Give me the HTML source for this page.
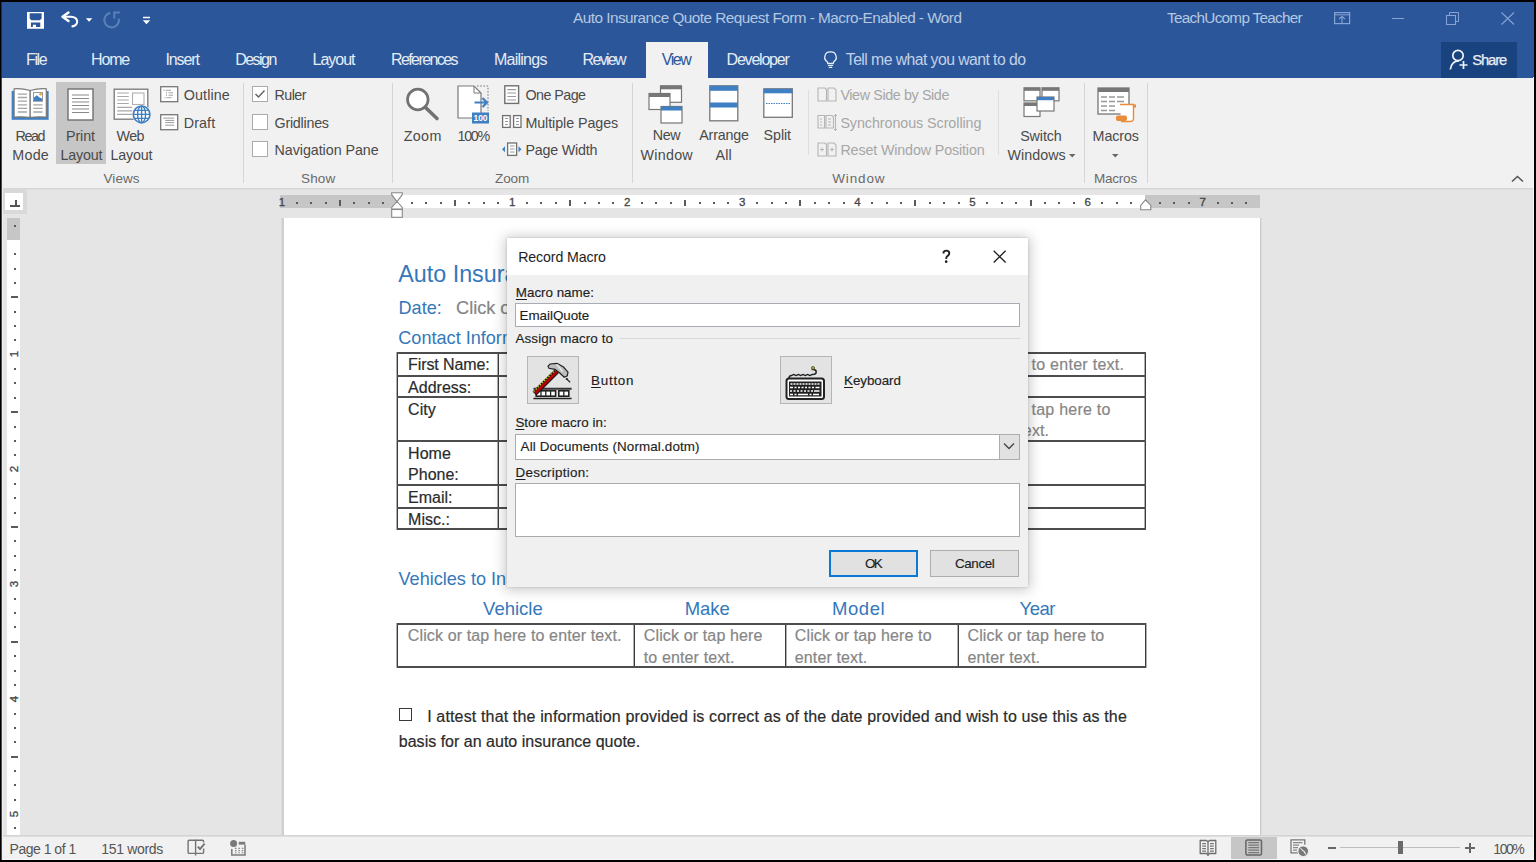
<!DOCTYPE html><html><head><meta charset="utf-8"><style>
html,body{margin:0;padding:0}
body{width:1536px;height:862px;overflow:hidden;position:relative;background:#000;font-family:"Liberation Sans",sans-serif}
.t{position:absolute;white-space:nowrap}
.r{position:absolute;box-sizing:border-box}
svg.r{overflow:visible}
u{text-decoration:underline;text-underline-offset:2px}
</style></head><body>
<div class="r" style="left:2px;top:2px;width:1532px;height:858px;background:#e5e5e5"></div>
<div class="r" style="left:2px;top:2px;width:1532px;height:76px;background:#2b579a"></div>
<div class="r" style="left:2px;top:78px;width:1532px;height:110px;background:#f1f1f1"></div>
<div class="r" style="left:2px;top:188px;width:1532px;height:1px;background:#d6d6d6"></div>
<div class="r" style="left:2px;top:189px;width:1532px;height:1px;background:#dedede"></div>
<div class="r" style="left:2px;top:835px;width:1532px;height:1px;background:#d4d4d4"></div>
<div class="r" style="left:2px;top:836px;width:1532px;height:1px;background:#dedede"></div>
<div class="r" style="left:2px;top:837px;width:1532px;height:23px;background:#f1f1f1"></div>
<div class="t" style="left:573.0px;top:10.00px;font-size:15.3px;line-height:15.3px;color:#b6c7e1;letter-spacing:-0.514px;">Auto Insurance Quote Request Form - Macro-Enabled - Word</div>
<div class="t" style="left:1167.0px;top:10.00px;font-size:15.3px;line-height:15.3px;color:#b6c7e1;letter-spacing:-0.706px;">TeachUcomp Teacher</div>
<svg class="r" style="left:27px;top:12px;" width="17" height="17" viewBox="0 0 17 17"><path d="M0 0H17V16.7H0z M2.7 1.3V6.5L4.4 8.2H12.9L14.6 6.5V1.3z M3.9 10.5V14.9H5.9V12.8H9V14.9H13.3V10.5z" fill="#fff" fill-rule="evenodd"/></svg>
<svg class="r" style="left:58px;top:8px;" width="38" height="23" viewBox="0 0 38 23"><path d="M10.5 4.6 L4.5 8.8 L10.5 13" fill="none" stroke="#fff" stroke-width="2.4" stroke-linejoin="round" stroke-linecap="round"/><path d="M5.5 8.8 H13 A6.6 4.9 0 0 1 14.4 18.4" fill="none" stroke="#fff" stroke-width="2.1" stroke-linecap="round"/><path d="M27.8 10.2 H34.3 L31.05 13.7 Z" fill="#fff"/></svg>
<svg class="r" style="left:100px;top:8px;" width="24" height="23" viewBox="0 0 24 23"><path d="M10.2 4.9 A7.3 7.3 0 1 0 18.8 10.6" fill="none" stroke="#5b7fb8" stroke-width="2.1"/><path d="M14.3 10.8 V4.6 H19.8" fill="none" stroke="#5b7fb8" stroke-width="2"/></svg>
<svg class="r" style="left:142px;top:16px;" width="9" height="9" viewBox="0 0 9 9"><path d="M1 1.5h7" stroke="#fff" stroke-width="1.5"/><path d="M0.8 4.2h7.4l-3.7 4z" fill="#fff"/></svg>
<svg class="r" style="left:1334px;top:12px;" width="17" height="13" viewBox="0 0 17 13"><rect x="0.6" y="0.6" width="15" height="11" fill="none" stroke="#86a3d3" stroke-width="1.2"/><path d="M0.6 2.8h15" stroke="#86a3d3" stroke-width="1"/><path d="M8 11.6V4 M5.2 7 L8 4.2 L10.8 7" fill="none" stroke="#86a3d3" stroke-width="1.1"/></svg>
<div class="r" style="left:1392px;top:18px;width:12px;height:1px;background:#86a3d3"></div>
<svg class="r" style="left:1446px;top:12px;" width="14" height="13" viewBox="0 0 14 13"><rect x="0.5" y="3.5" width="9" height="9" fill="none" stroke="#86a3d3"/><path d="M3.5 3.5V0.5h9v9h-3" fill="none" stroke="#86a3d3"/></svg>
<svg class="r" style="left:1501px;top:12px;" width="14" height="13" viewBox="0 0 14 13"><path d="M0.5 0.5L13 12.5M13 0.5L0.5 12.5" stroke="#86a3d3" stroke-width="1.1"/></svg>
<div class="t" style="left:26.0px;top:52.00px;font-size:16px;line-height:16px;color:#e6ecf5;letter-spacing:-1.361px;">File</div>
<div class="t" style="left:91.1px;top:52.00px;font-size:16px;line-height:16px;color:#e6ecf5;letter-spacing:-1.194px;">Home</div>
<div class="t" style="left:165.4px;top:52.00px;font-size:16px;line-height:16px;color:#e6ecf5;letter-spacing:-1.083px;">Insert</div>
<div class="t" style="left:235.2px;top:52.00px;font-size:16px;line-height:16px;color:#e6ecf5;letter-spacing:-1.541px;">Design</div>
<div class="t" style="left:312.5px;top:52.00px;font-size:16px;line-height:16px;color:#e6ecf5;letter-spacing:-1.008px;">Layout</div>
<div class="t" style="left:390.9px;top:52.00px;font-size:16px;line-height:16px;color:#e6ecf5;letter-spacing:-1.569px;">References</div>
<div class="t" style="left:494.0px;top:52.00px;font-size:16px;line-height:16px;color:#e6ecf5;letter-spacing:-0.756px;">Mailings</div>
<div class="t" style="left:582.6px;top:52.00px;font-size:16px;line-height:16px;color:#e6ecf5;letter-spacing:-1.692px;">Review</div>
<div class="t" style="left:726.6px;top:52.00px;font-size:16px;line-height:16px;color:#e6ecf5;letter-spacing:-1.217px;">Developer</div>
<div class="r" style="left:646px;top:42px;width:62px;height:36px;background:#f1f1f1"></div>
<div class="t" style="left:661.8px;top:52.00px;font-size:16px;line-height:16px;color:#2b579a;letter-spacing:-1.497px;">View</div>
<svg class="r" style="left:823px;top:51px;" width="15" height="17" viewBox="0 0 15 17"><path d="M7.5 1 A5.3 5.3 0 0 0 4.3 10.8 L4.8 12.5 H10.2 L10.7 10.8 A5.3 5.3 0 0 0 7.5 1z" fill="none" stroke="#e8eef7" stroke-width="1.3"/><path d="M5 14.5h5M5.8 16.3h3.4" stroke="#e8eef7" stroke-width="1.2"/></svg>
<div class="t" style="left:845.8px;top:52.00px;font-size:15.8px;line-height:15.8px;color:#c3d1e8;letter-spacing:-0.568px;">Tell me what you want to do</div>
<div class="r" style="left:1441px;top:42px;width:76px;height:36px;background:#19437f"></div>
<svg class="r" style="left:1449px;top:49px;" width="20" height="21" viewBox="0 0 20 21"><circle cx="9" cy="6.5" r="5.2" fill="none" stroke="#eef2f8" stroke-width="1.7"/><path d="M1.3 20.5 C2 15.5 5 12 10 11.7" fill="none" stroke="#eef2f8" stroke-width="1.7"/><path d="M10.5 16h8M14.5 12v8" stroke="#eef2f8" stroke-width="1.7"/></svg>
<div class="t" style="left:1472.3px;top:53.00px;font-size:14.8px;line-height:14.8px;color:#e8eef6;letter-spacing:-1.149px;-webkit-text-stroke:0.25px #e8eef6;">Share</div>
<div class="r" style="left:243px;top:83px;width:1px;height:100px;background:#d5d5d5"></div>
<div class="r" style="left:392px;top:83px;width:1px;height:100px;background:#d5d5d5"></div>
<div class="r" style="left:632px;top:83px;width:1px;height:100px;background:#d5d5d5"></div>
<div class="r" style="left:1084px;top:83px;width:1px;height:100px;background:#d5d5d5"></div>
<div class="r" style="left:1147px;top:83px;width:1px;height:100px;background:#d5d5d5"></div>
<div class="r" style="left:808px;top:90px;width:1px;height:65px;background:#dedede"></div>
<div class="r" style="left:998px;top:90px;width:1px;height:65px;background:#dedede"></div>
<div class="t" style="left:103.5px;top:172.00px;font-size:13.5px;line-height:13.5px;color:#6a6a6a;letter-spacing:0.058px;">Views</div>
<div class="t" style="left:301.0px;top:172.00px;font-size:13.5px;line-height:13.5px;color:#6a6a6a;letter-spacing:0.143px;">Show</div>
<div class="t" style="left:495.0px;top:172.00px;font-size:13.5px;line-height:13.5px;color:#6a6a6a;letter-spacing:-0.103px;">Zoom</div>
<div class="t" style="left:832.2px;top:172.00px;font-size:13.5px;line-height:13.5px;color:#6a6a6a;letter-spacing:0.877px;">Window</div>
<div class="t" style="left:1093.9px;top:172.00px;font-size:13.5px;line-height:13.5px;color:#6a6a6a;letter-spacing:-0.192px;">Macros</div>
<svg class="r" style="left:1511px;top:175px;" width="13" height="8" viewBox="0 0 13 8"><path d="M1 6.5L6.5 1.5L12 6.5" fill="none" stroke="#555" stroke-width="1.6"/></svg>
<div class="r" style="left:56px;top:82px;width:50px;height:82px;background:#c6c6c6"></div>
<svg class="r" style="left:11px;top:88px;" width="38" height="33" viewBox="0 0 38 33"><rect x="0.65" y="3" width="37" height="28.8" fill="#3f7fc4"/><path d="M3.1 0.8Q11 0.2 19.2 2.5V29.3Q11 28.4 3.1 29.1Z" fill="#fff" stroke="#7a7a7a" stroke-width="1.2"/><path d="M35.3 0.8Q27.5 0.2 19.2 2.5V29.3Q27.5 28.4 35.3 29.1Z" fill="#fff" stroke="#7a7a7a" stroke-width="1.2"/><path d="M6.8 6.1h9.2M6.8 9.5h9.2M6.8 13.2h9.2M6.8 16.8h9.2M6.8 20.3h9.2M6.8 24h9.2M22.3 16.8h9.3M22.3 20.3h9.3M22.3 24h9.3" stroke="#a5a5a5" stroke-width="1.3"/><rect x="22.5" y="4.5" width="9" height="8.8" fill="#fff" stroke="#999" stroke-width="1"/><path d="M23 13V9.5L25.8 7.3 28.5 9.5 31 10.5V13z" fill="#3f7fc4"/><circle cx="29.6" cy="6.2" r="1.3" fill="#f0a030"/></svg>
<div class="t" style="left:15.5px;top:129.00px;font-size:14.3px;line-height:14.3px;color:#4a4a4a;letter-spacing:-1.396px;">Read</div>
<div class="t" style="left:12.3px;top:148.00px;font-size:14.3px;line-height:14.3px;color:#4a4a4a;letter-spacing:0.243px;">Mode</div>
<svg class="r" style="left:67px;top:88px;" width="27" height="33" viewBox="0 0 27 33"><rect x="1" y="1" width="25" height="31" fill="#fff" stroke="#707070" stroke-width="1.4"/><path d="M5 7h17M5 10.5h17M5 14h17M5 17.5h17M5 21h17M5 24.5h17" stroke="#8a8a8a" stroke-width="1.1"/></svg>
<div class="t" style="left:66.0px;top:129.00px;font-size:14.3px;line-height:14.3px;color:#4a4a4a;letter-spacing:-0.101px;">Print</div>
<div class="t" style="left:60.5px;top:148.00px;font-size:14.3px;line-height:14.3px;color:#4a4a4a;letter-spacing:-0.187px;">Layout</div>
<svg class="r" style="left:113px;top:88px;" width="39" height="37" viewBox="0 0 39 37"><rect x="1.2" y="1.2" width="33.6" height="30" fill="#fff" stroke="#777" stroke-width="1.3"/><path d="M4.2 5h11.6M4.2 8.5h11.6M4.2 12h11.6M4.2 15.5h11.6M4.2 19.3h15M4.2 22.8h15M4.2 26.4h15" stroke="#a8a8a8" stroke-width="1.2"/><rect x="19.5" y="5" width="11.5" height="11.5" fill="#fff" stroke="#b0b0b0" stroke-width="1.1"/><circle cx="28.6" cy="26.4" r="9.6" fill="#f1f1f1"/><circle cx="28.6" cy="26.4" r="8.3" fill="#fff" stroke="#3f7fc4" stroke-width="1.6"/><ellipse cx="28.6" cy="26.4" rx="4" ry="8.3" fill="none" stroke="#3f7fc4" stroke-width="1.4"/><path d="M20.3 26.4h16.6M21.5 22.4h14.2M21.5 30.4h14.2M28.6 18v16.7" stroke="#3f7fc4" stroke-width="1.4"/></svg>
<div class="t" style="left:116.5px;top:129.00px;font-size:14.3px;line-height:14.3px;color:#4a4a4a;letter-spacing:-0.573px;">Web</div>
<div class="t" style="left:110.5px;top:148.00px;font-size:14.3px;line-height:14.3px;color:#4a4a4a;letter-spacing:-0.187px;">Layout</div>
<svg class="r" style="left:160px;top:86px;" width="19" height="17" viewBox="0 0 19 17"><rect x="0.7" y="0.7" width="17" height="15" fill="#fff" stroke="#777" stroke-width="1.3"/><path d="M5.5 4.3h5.5M8.5 6.8h4.5M8.5 9.2h4.5M6.5 11.7h5" stroke="#999" stroke-width="0.9"/><path d="M3.5 4.3h1M6 6.8h1M6 9.2h1M4.5 11.7h1" stroke="#888" stroke-width="1"/></svg>
<div class="t" style="left:183.7px;top:88.00px;font-size:14.3px;line-height:14.3px;color:#4a4a4a;letter-spacing:0.132px;">Outline</div>
<svg class="r" style="left:160px;top:114px;" width="19" height="17" viewBox="0 0 19 17"><rect x="0.7" y="0.7" width="17" height="15" fill="#fff" stroke="#777" stroke-width="1.3"/><path d="M3.2 4.1h11M5.2 6.4h9M5.2 8.6h9M5.2 11.2h9" stroke="#9a9a9a" stroke-width="1"/></svg>
<div class="t" style="left:183.7px;top:116.00px;font-size:14.3px;line-height:14.3px;color:#4a4a4a;letter-spacing:0.128px;">Draft</div>
<div class="r" style="left:252px;top:86px;width:16px;height:16px;background:#fff;border:1px solid #ababab"></div>
<div class="r" style="left:252px;top:114px;width:16px;height:16px;background:#fff;border:1px solid #ababab"></div>
<div class="r" style="left:252px;top:141px;width:16px;height:16px;background:#fff;border:1px solid #ababab"></div>
<svg class="r" style="left:254px;top:89px;" width="12" height="10" viewBox="0 0 12 10"><path d="M1.5 5l3 3L10.5 1.5" fill="none" stroke="#666" stroke-width="1.5"/></svg>
<div class="t" style="left:274.5px;top:88.00px;font-size:14.3px;line-height:14.3px;color:#4a4a4a;letter-spacing:-0.543px;">Ruler</div>
<div class="t" style="left:274.5px;top:116.00px;font-size:14.3px;line-height:14.3px;color:#4a4a4a;letter-spacing:-0.241px;">Gridlines</div>
<div class="t" style="left:274.5px;top:143.00px;font-size:14.3px;line-height:14.3px;color:#4a4a4a;letter-spacing:-0.053px;">Navigation Pane</div>
<svg class="r" style="left:405px;top:87px;" width="35" height="34" viewBox="0 0 35 34"><circle cx="12.8" cy="12.5" r="10.3" fill="#fff" stroke="#727272" stroke-width="2.7"/><path d="M20.5 20.5l11.5 11" stroke="#727272" stroke-width="3.6" stroke-linecap="round"/></svg>
<div class="t" style="left:403.8px;top:129.00px;font-size:14.3px;line-height:14.3px;color:#4a4a4a;letter-spacing:0.315px;">Zoom</div>
<svg class="r" style="left:457px;top:85px;" width="33" height="39" viewBox="0 0 33 39"><path d="M1 1h16l7 7v25H1z" fill="#fff" stroke="#7a7a7a" stroke-width="1.2"/><path d="M17 1v7h7" fill="none" stroke="#7a7a7a" stroke-width="1"/><path d="M20 1h11v25" fill="none" stroke="#7a7a7a" stroke-width="1" stroke-dasharray="1.6 1.6"/><path d="M17.5 17.5h12M25.5 13l4.5 4.5-4.5 4.5" fill="none" stroke="#3f7fc4" stroke-width="2.2"/><rect x="15" y="27.5" width="17" height="11" fill="#3f7fc4"/><text x="23.5" y="36.3" font-size="8.5" font-family="Liberation Sans" fill="#fff" text-anchor="middle" font-weight="bold">100</text></svg>
<div class="t" style="left:457.5px;top:129.00px;font-size:14.3px;line-height:14.3px;color:#4a4a4a;letter-spacing:-1.325px;">100%</div>
<svg class="r" style="left:504px;top:85px;" width="16" height="20" viewBox="0 0 16 20"><rect x="0.8" y="0.8" width="13.8" height="17.6" fill="#fff" stroke="#707070" stroke-width="1.4"/><path d="M3.3 4.6h8.7M3.3 8h8.7M3.3 11.5h8.7M3.3 15h8.7" stroke="#9a9a9a" stroke-width="1.2"/></svg>
<div class="t" style="left:525.4px;top:88.00px;font-size:14.3px;line-height:14.3px;color:#4a4a4a;letter-spacing:-0.529px;">One Page</div>
<svg class="r" style="left:501px;top:114px;" width="21" height="15" viewBox="0 0 21 15"><rect x="1.6" y="1.6" width="7.6" height="11.8" fill="#fff" stroke="#707070" stroke-width="1.3"/><rect x="12.6" y="1.6" width="7.4" height="11.8" fill="#fff" stroke="#707070" stroke-width="1.3"/><path d="M4 4.5h3M4 7.5h3M4 10.5h3M15 4.5h3M15 7.5h3M15 10.5h3" stroke="#999" stroke-width="1"/></svg>
<div class="t" style="left:525.4px;top:116.00px;font-size:14.3px;line-height:14.3px;color:#4a4a4a;letter-spacing:-0.069px;">Multiple Pages</div>
<svg class="r" style="left:501px;top:142px;" width="21" height="15" viewBox="0 0 21 15"><rect x="6.6" y="1" width="9" height="12.4" fill="#fff" stroke="#707070" stroke-width="1.3"/><path d="M9 4h4.5M9 7h4.5M9 10h4.5" stroke="#999" stroke-width="1"/><path d="M1 7.2L4 4.2v6z M20.5 7.2L17.5 4.2v6z" fill="#3f7fc4"/></svg>
<div class="t" style="left:525.4px;top:143.00px;font-size:14.3px;line-height:14.3px;color:#4a4a4a;letter-spacing:-0.203px;">Page Width</div>
<svg class="r" style="left:648px;top:85px;" width="36" height="40" viewBox="0 0 36 40"><rect x="12.5" y="0.8" width="21" height="16.5" fill="#fff" stroke="#777" stroke-width="1.2"/><rect x="12.5" y="0.8" width="21" height="3.5" fill="#777"/><rect x="1" y="8.5" width="21" height="16" fill="#fff" stroke="#777" stroke-width="1.2"/><rect x="1" y="8.5" width="21" height="3.5" fill="#777"/><rect x="13" y="21.5" width="21" height="16.5" fill="#fff" stroke="#777" stroke-width="1.2"/><rect x="13" y="21.5" width="21" height="4" fill="#3f7fc4"/></svg>
<div class="t" style="left:652.8px;top:128.00px;font-size:14.3px;line-height:14.3px;color:#4a4a4a;letter-spacing:-0.454px;">New</div>
<div class="t" style="left:640.6px;top:148.00px;font-size:14.3px;line-height:14.3px;color:#4a4a4a;letter-spacing:0.248px;">Window</div>
<svg class="r" style="left:709px;top:85px;" width="30" height="37" viewBox="0 0 30 37"><rect x="0.8" y="0.8" width="28" height="35" fill="#fff" stroke="#777" stroke-width="1.3"/><rect x="0.8" y="0.8" width="28" height="5" fill="#3f7fc4"/><rect x="0.8" y="17.5" width="28" height="5" fill="#3f7fc4"/></svg>
<div class="t" style="left:699.2px;top:128.00px;font-size:14.3px;line-height:14.3px;color:#4a4a4a;letter-spacing:-0.163px;">Arrange</div>
<div class="t" style="left:715.4px;top:148.00px;font-size:14.3px;line-height:14.3px;color:#4a4a4a;letter-spacing:0.203px;">All</div>
<svg class="r" style="left:763px;top:88px;" width="30" height="31" viewBox="0 0 30 31"><rect x="0.8" y="0.8" width="28.5" height="28.5" fill="#fff" stroke="#777" stroke-width="1.3"/><rect x="0.8" y="0.8" width="28.5" height="4.5" fill="#3f7fc4"/><path d="M3 15.5h24" stroke="#3f7fc4" stroke-width="1.2" stroke-dasharray="1.5 1"/></svg>
<div class="t" style="left:763.5px;top:128.00px;font-size:14.3px;line-height:14.3px;color:#4a4a4a;letter-spacing:-0.055px;">Split</div>
<svg class="r" style="left:817px;top:87px;" width="20" height="15" viewBox="0 0 20 15"><path d="M1 1h7l1.5 1.5V14H1z M11 1h6l2 2V14h-8z" fill="none" stroke="#b5b5b5" stroke-width="1.1"/></svg>
<div class="t" style="left:840.4px;top:88.00px;font-size:14.3px;line-height:14.3px;color:#a6a6a6;letter-spacing:-0.375px;">View Side by Side</div>
<svg class="r" style="left:817px;top:114px;" width="20" height="18" viewBox="0 0 20 18"><path d="M1 1.5h6.5V14H1z M9 1.5h6l1.5 1.5V14H9z" fill="none" stroke="#b5b5b5" stroke-width="1.1"/><path d="M3 5h2M3 8h2M3 11h2M11 5h3M11 8h3M11 11h3" stroke="#b5b5b5"/><path d="M18.5 0v17M17 2l1.5-1.5L20 2M17 15l1.5 1.5L20 15" fill="none" stroke="#b5b5b5" stroke-width="1"/></svg>
<div class="t" style="left:840.4px;top:116.00px;font-size:14.3px;line-height:14.3px;color:#a6a6a6;letter-spacing:-0.059px;">Synchronous Scrolling</div>
<svg class="r" style="left:817px;top:142px;" width="20" height="15" viewBox="0 0 20 15"><path d="M1 1h7l1.5 1.5V14H1z M11 1h6l2 2V14h-8z" fill="none" stroke="#b5b5b5" stroke-width="1.1"/><path d="M3 7.5h4M5 5.5v4M13 7.5h4M15 5.5v4" stroke="#b5b5b5"/></svg>
<div class="t" style="left:840.4px;top:143.00px;font-size:14.3px;line-height:14.3px;color:#a6a6a6;letter-spacing:-0.137px;">Reset Window Position</div>
<svg class="r" style="left:1023px;top:87px;" width="37" height="31" viewBox="0 0 37 31"><rect x="1" y="0.8" width="16" height="13" fill="#fff" stroke="#777" stroke-width="1.2"/><rect x="1" y="0.8" width="16" height="3" fill="#777"/><rect x="19" y="0.8" width="17" height="13" fill="#fff" stroke="#777" stroke-width="1.2"/><rect x="19" y="0.8" width="17" height="3" fill="#777"/><rect x="1" y="16" width="16" height="13.5" fill="#fff" stroke="#777" stroke-width="1.2"/><rect x="1" y="16" width="16" height="3" fill="#777"/><rect x="14" y="10" width="17" height="14" fill="#fff" stroke="#777" stroke-width="1.2"/><rect x="14" y="10" width="17" height="3.2" fill="#3f7fc4"/></svg>
<div class="t" style="left:1020.2px;top:129.00px;font-size:14.3px;line-height:14.3px;color:#4a4a4a;letter-spacing:-0.104px;">Switch</div>
<div class="t" style="left:1007.5px;top:148.00px;font-size:14.3px;line-height:14.3px;color:#4a4a4a;letter-spacing:0.031px;">Windows</div>
<svg class="r" style="left:1069px;top:154px;" width="7" height="4" viewBox="0 0 7 4"><path d="M0 0h6.5L3.25 3.5z" fill="#666"/></svg>
<svg class="r" style="left:1097px;top:87px;" width="40" height="36" viewBox="0 0 40 36"><rect x="1" y="1" width="31" height="26" fill="#fff" stroke="#777" stroke-width="1.3"/><rect x="1" y="1" width="31" height="4" fill="#777"/><path d="M4 10h6M12 10h6M20 10h7M4 14.5h6M12 14.5h6M20 14.5h7M4 19h6M12 19h6M4 23.5h6M12 23.5h6" stroke="#999" stroke-width="1.3"/><path d="M23 17.5h13.5v14c0 2-1.5 3-3.5 3H24" fill="#fff" stroke="#e88b3a" stroke-width="1.4"/><path d="M36.5 17.5h2.5v3h-2.5z" fill="#e88b3a"/><rect x="19" y="28.5" width="11" height="5.5" rx="2" fill="#e88b3a"/></svg>
<div class="t" style="left:1092.6px;top:129.00px;font-size:14.3px;line-height:14.3px;color:#4a4a4a;letter-spacing:-0.116px;">Macros</div>
<svg class="r" style="left:1112px;top:154px;" width="7" height="4" viewBox="0 0 7 4"><path d="M0 0h6.5L3.25 3.5z" fill="#666"/></svg>
<div class="r" style="left:3px;top:189px;width:24px;height:25px;background:#d9d9d9"></div>
<div class="r" style="left:5px;top:193px;width:18px;height:17px;background:#fff"></div>
<div class="r" style="left:15px;top:200px;width:1.5px;height:6px;background:#555"></div>
<div class="r" style="left:10px;top:205px;width:10px;height:2px;background:#555"></div>
<div class="r" style="left:280px;top:195px;width:117px;height:13px;background:#c6c6c6"></div>
<div class="r" style="left:397px;top:195px;width:748px;height:13px;background:#fff"></div>
<div class="r" style="left:1145px;top:195px;width:115px;height:13px;background:#c6c6c6"></div>
<div class="t" style="left:277.9px;top:196px;width:8px;text-align:center;font-size:11.5px;line-height:12px;color:#444;-webkit-text-stroke:0.3px #444">1</div>
<div class="r" style="left:296px;top:202px;width:2px;height:2px;background:#5a5a5a"></div>
<div class="r" style="left:310px;top:202px;width:2px;height:2px;background:#5a5a5a"></div>
<div class="r" style="left:325px;top:202px;width:2px;height:2px;background:#5a5a5a"></div>
<div class="r" style="left:339px;top:200px;width:1.5px;height:6px;background:#5a5a5a"></div>
<div class="r" style="left:353px;top:202px;width:2px;height:2px;background:#5a5a5a"></div>
<div class="r" style="left:368px;top:202px;width:2px;height:2px;background:#5a5a5a"></div>
<div class="r" style="left:382px;top:202px;width:2px;height:2px;background:#5a5a5a"></div>
<div class="r" style="left:411px;top:202px;width:2px;height:2px;background:#5a5a5a"></div>
<div class="r" style="left:425px;top:202px;width:2px;height:2px;background:#5a5a5a"></div>
<div class="r" style="left:440px;top:202px;width:2px;height:2px;background:#5a5a5a"></div>
<div class="r" style="left:454px;top:200px;width:1.5px;height:6px;background:#5a5a5a"></div>
<div class="r" style="left:468px;top:202px;width:2px;height:2px;background:#5a5a5a"></div>
<div class="r" style="left:483px;top:202px;width:2px;height:2px;background:#5a5a5a"></div>
<div class="r" style="left:497px;top:202px;width:2px;height:2px;background:#5a5a5a"></div>
<div class="t" style="left:508.1px;top:196px;width:8px;text-align:center;font-size:11.5px;line-height:12px;color:#444;-webkit-text-stroke:0.3px #444">1</div>
<div class="r" style="left:526px;top:202px;width:2px;height:2px;background:#5a5a5a"></div>
<div class="r" style="left:540px;top:202px;width:2px;height:2px;background:#5a5a5a"></div>
<div class="r" style="left:555px;top:202px;width:2px;height:2px;background:#5a5a5a"></div>
<div class="r" style="left:569px;top:200px;width:1.5px;height:6px;background:#5a5a5a"></div>
<div class="r" style="left:584px;top:202px;width:2px;height:2px;background:#5a5a5a"></div>
<div class="r" style="left:598px;top:202px;width:2px;height:2px;background:#5a5a5a"></div>
<div class="r" style="left:612px;top:202px;width:2px;height:2px;background:#5a5a5a"></div>
<div class="t" style="left:623.2px;top:196px;width:8px;text-align:center;font-size:11.5px;line-height:12px;color:#444;-webkit-text-stroke:0.3px #444">2</div>
<div class="r" style="left:641px;top:202px;width:2px;height:2px;background:#5a5a5a"></div>
<div class="r" style="left:655px;top:202px;width:2px;height:2px;background:#5a5a5a"></div>
<div class="r" style="left:670px;top:202px;width:2px;height:2px;background:#5a5a5a"></div>
<div class="r" style="left:684px;top:200px;width:1.5px;height:6px;background:#5a5a5a"></div>
<div class="r" style="left:699px;top:202px;width:2px;height:2px;background:#5a5a5a"></div>
<div class="r" style="left:713px;top:202px;width:2px;height:2px;background:#5a5a5a"></div>
<div class="r" style="left:727px;top:202px;width:2px;height:2px;background:#5a5a5a"></div>
<div class="t" style="left:738.3px;top:196px;width:8px;text-align:center;font-size:11.5px;line-height:12px;color:#444;-webkit-text-stroke:0.3px #444">3</div>
<div class="r" style="left:756px;top:202px;width:2px;height:2px;background:#5a5a5a"></div>
<div class="r" style="left:771px;top:202px;width:2px;height:2px;background:#5a5a5a"></div>
<div class="r" style="left:785px;top:202px;width:2px;height:2px;background:#5a5a5a"></div>
<div class="r" style="left:799px;top:200px;width:1.5px;height:6px;background:#5a5a5a"></div>
<div class="r" style="left:814px;top:202px;width:2px;height:2px;background:#5a5a5a"></div>
<div class="r" style="left:828px;top:202px;width:2px;height:2px;background:#5a5a5a"></div>
<div class="r" style="left:843px;top:202px;width:2px;height:2px;background:#5a5a5a"></div>
<div class="t" style="left:853.4px;top:196px;width:8px;text-align:center;font-size:11.5px;line-height:12px;color:#444;-webkit-text-stroke:0.3px #444">4</div>
<div class="r" style="left:871px;top:202px;width:2px;height:2px;background:#5a5a5a"></div>
<div class="r" style="left:886px;top:202px;width:2px;height:2px;background:#5a5a5a"></div>
<div class="r" style="left:900px;top:202px;width:2px;height:2px;background:#5a5a5a"></div>
<div class="r" style="left:914px;top:200px;width:1.5px;height:6px;background:#5a5a5a"></div>
<div class="r" style="left:929px;top:202px;width:2px;height:2px;background:#5a5a5a"></div>
<div class="r" style="left:943px;top:202px;width:2px;height:2px;background:#5a5a5a"></div>
<div class="r" style="left:958px;top:202px;width:2px;height:2px;background:#5a5a5a"></div>
<div class="t" style="left:968.5px;top:196px;width:8px;text-align:center;font-size:11.5px;line-height:12px;color:#444;-webkit-text-stroke:0.3px #444">5</div>
<div class="r" style="left:986px;top:202px;width:2px;height:2px;background:#5a5a5a"></div>
<div class="r" style="left:1001px;top:202px;width:2px;height:2px;background:#5a5a5a"></div>
<div class="r" style="left:1015px;top:202px;width:2px;height:2px;background:#5a5a5a"></div>
<div class="r" style="left:1030px;top:200px;width:1.5px;height:6px;background:#5a5a5a"></div>
<div class="r" style="left:1044px;top:202px;width:2px;height:2px;background:#5a5a5a"></div>
<div class="r" style="left:1058px;top:202px;width:2px;height:2px;background:#5a5a5a"></div>
<div class="r" style="left:1073px;top:202px;width:2px;height:2px;background:#5a5a5a"></div>
<div class="t" style="left:1083.6px;top:196px;width:8px;text-align:center;font-size:11.5px;line-height:12px;color:#444;-webkit-text-stroke:0.3px #444">6</div>
<div class="r" style="left:1101px;top:202px;width:2px;height:2px;background:#5a5a5a"></div>
<div class="r" style="left:1116px;top:202px;width:2px;height:2px;background:#5a5a5a"></div>
<div class="r" style="left:1130px;top:202px;width:2px;height:2px;background:#5a5a5a"></div>
<div class="r" style="left:1145px;top:200px;width:1.5px;height:6px;background:#5a5a5a"></div>
<div class="r" style="left:1159px;top:202px;width:2px;height:2px;background:#5a5a5a"></div>
<div class="r" style="left:1173px;top:202px;width:2px;height:2px;background:#5a5a5a"></div>
<div class="r" style="left:1188px;top:202px;width:2px;height:2px;background:#5a5a5a"></div>
<div class="t" style="left:1198.7px;top:196px;width:8px;text-align:center;font-size:11.5px;line-height:12px;color:#444;-webkit-text-stroke:0.3px #444">7</div>
<div class="r" style="left:1217px;top:202px;width:2px;height:2px;background:#5a5a5a"></div>
<div class="r" style="left:1231px;top:202px;width:2px;height:2px;background:#5a5a5a"></div>
<div class="r" style="left:1245px;top:202px;width:2px;height:2px;background:#5a5a5a"></div>
<svg class="r" style="left:391px;top:192px;" width="12" height="26" viewBox="0 0 12 26"><path d="M0.7 0.7h10.6v2L6 9.5 0.7 2.7z" fill="#fff" stroke="#888" stroke-width="1.1"/><path d="M6 9.5L11.3 15.5v1.5H0.7v-1.5z" fill="#fff" stroke="#888" stroke-width="1.1"/><rect x="0.7" y="17.5" width="10.6" height="7.8" fill="#fff" stroke="#888" stroke-width="1.1"/></svg>
<svg class="r" style="left:1140px;top:199px;" width="12" height="12" viewBox="0 0 12 12"><path d="M5.5 0.8L10.8 6.5v4.2H0.7V6.5z" fill="#fff" stroke="#888" stroke-width="1.1"/></svg>
<div class="r" style="left:7px;top:218px;width:13px;height:22px;background:#c6c6c6"></div>
<div class="r" style="left:7px;top:240px;width:13px;height:595px;background:#fff"></div>
<div class="r" style="left:14px;top:225px;width:2px;height:2px;background:#5a5a5a"></div>
<div class="r" style="left:14px;top:253px;width:2px;height:2px;background:#5a5a5a"></div>
<div class="r" style="left:14px;top:268px;width:2px;height:2px;background:#5a5a5a"></div>
<div class="r" style="left:14px;top:282px;width:2px;height:2px;background:#5a5a5a"></div>
<div class="r" style="left:11px;top:296px;width:7px;height:1.5px;background:#5a5a5a"></div>
<div class="r" style="left:14px;top:311px;width:2px;height:2px;background:#5a5a5a"></div>
<div class="r" style="left:14px;top:325px;width:2px;height:2px;background:#5a5a5a"></div>
<div class="r" style="left:14px;top:339px;width:2px;height:2px;background:#5a5a5a"></div>
<div class="t" style="left:8px;top:348.3px;width:12px;height:12px;text-align:center;font-size:11.5px;line-height:12px;color:#444;-webkit-text-stroke:0.3px #444;transform:rotate(-90deg)">1</div>
<div class="r" style="left:14px;top:368px;width:2px;height:2px;background:#5a5a5a"></div>
<div class="r" style="left:14px;top:382px;width:2px;height:2px;background:#5a5a5a"></div>
<div class="r" style="left:14px;top:397px;width:2px;height:2px;background:#5a5a5a"></div>
<div class="r" style="left:11px;top:411px;width:7px;height:1.5px;background:#5a5a5a"></div>
<div class="r" style="left:14px;top:426px;width:2px;height:2px;background:#5a5a5a"></div>
<div class="r" style="left:14px;top:440px;width:2px;height:2px;background:#5a5a5a"></div>
<div class="r" style="left:14px;top:454px;width:2px;height:2px;background:#5a5a5a"></div>
<div class="t" style="left:8px;top:463.1px;width:12px;height:12px;text-align:center;font-size:11.5px;line-height:12px;color:#444;-webkit-text-stroke:0.3px #444;transform:rotate(-90deg)">2</div>
<div class="r" style="left:14px;top:483px;width:2px;height:2px;background:#5a5a5a"></div>
<div class="r" style="left:14px;top:497px;width:2px;height:2px;background:#5a5a5a"></div>
<div class="r" style="left:14px;top:512px;width:2px;height:2px;background:#5a5a5a"></div>
<div class="r" style="left:11px;top:526px;width:7px;height:1.5px;background:#5a5a5a"></div>
<div class="r" style="left:14px;top:540px;width:2px;height:2px;background:#5a5a5a"></div>
<div class="r" style="left:14px;top:555px;width:2px;height:2px;background:#5a5a5a"></div>
<div class="r" style="left:14px;top:569px;width:2px;height:2px;background:#5a5a5a"></div>
<div class="t" style="left:8px;top:577.9px;width:12px;height:12px;text-align:center;font-size:11.5px;line-height:12px;color:#444;-webkit-text-stroke:0.3px #444;transform:rotate(-90deg)">3</div>
<div class="r" style="left:14px;top:598px;width:2px;height:2px;background:#5a5a5a"></div>
<div class="r" style="left:14px;top:612px;width:2px;height:2px;background:#5a5a5a"></div>
<div class="r" style="left:14px;top:626px;width:2px;height:2px;background:#5a5a5a"></div>
<div class="r" style="left:11px;top:641px;width:7px;height:1.5px;background:#5a5a5a"></div>
<div class="r" style="left:14px;top:655px;width:2px;height:2px;background:#5a5a5a"></div>
<div class="r" style="left:14px;top:670px;width:2px;height:2px;background:#5a5a5a"></div>
<div class="r" style="left:14px;top:684px;width:2px;height:2px;background:#5a5a5a"></div>
<div class="t" style="left:8px;top:692.7px;width:12px;height:12px;text-align:center;font-size:11.5px;line-height:12px;color:#444;-webkit-text-stroke:0.3px #444;transform:rotate(-90deg)">4</div>
<div class="r" style="left:14px;top:713px;width:2px;height:2px;background:#5a5a5a"></div>
<div class="r" style="left:14px;top:727px;width:2px;height:2px;background:#5a5a5a"></div>
<div class="r" style="left:14px;top:741px;width:2px;height:2px;background:#5a5a5a"></div>
<div class="r" style="left:11px;top:756px;width:7px;height:1.5px;background:#5a5a5a"></div>
<div class="r" style="left:14px;top:770px;width:2px;height:2px;background:#5a5a5a"></div>
<div class="r" style="left:14px;top:784px;width:2px;height:2px;background:#5a5a5a"></div>
<div class="r" style="left:14px;top:799px;width:2px;height:2px;background:#5a5a5a"></div>
<div class="t" style="left:8px;top:807.5px;width:12px;height:12px;text-align:center;font-size:11.5px;line-height:12px;color:#444;-webkit-text-stroke:0.3px #444;transform:rotate(-90deg)">5</div>
<div class="r" style="left:14px;top:827px;width:2px;height:2px;background:#5a5a5a"></div>
<div class="r" style="left:282px;top:218px;width:2px;height:617px;background:#cfcfcf"></div>
<div class="r" style="left:281px;top:218px;width:1px;height:617px;background:#dddddd"></div>
<div class="r" style="left:1260px;top:218px;width:1px;height:617px;background:#cacaca"></div>
<div class="r" style="left:1261px;top:218px;width:1px;height:617px;background:#dcdcdc"></div>
<div class="r" style="left:284px;top:218px;width:976px;height:617px;background:#fff"></div>
<div class="t" style="left:398.3px;top:263.00px;font-size:23.3px;line-height:23.3px;color:#3478ba;letter-spacing:0.000px;-webkit-text-stroke:0.01px #3478ba;">Auto Insurance Quote Request Form</div>
<div class="t" style="left:398.5px;top:299.00px;font-size:18.1px;line-height:18.1px;color:#3478ba;letter-spacing:0.010px;-webkit-text-stroke:0.01px #3478ba;">Date:</div>
<div class="t" style="left:456.1px;top:299.00px;font-size:18.1px;line-height:18.1px;color:#868686;letter-spacing:0.000px;-webkit-text-stroke:0.2px #868686;">Click or tap here to enter text.</div>
<div class="t" style="left:398.3px;top:329.00px;font-size:18.1px;line-height:18.1px;color:#3478ba;letter-spacing:0.000px;-webkit-text-stroke:0.01px #3478ba;">Contact Information</div>
<div class="r" style="left:396px;top:352px;width:1px;height:178px;background:#b0b0b0"></div>
<div class="r" style="left:397px;top:352px;width:1px;height:178px;background:#3a3a3a"></div>
<div class="r" style="left:1144px;top:352px;width:1px;height:178px;background:#b0b0b0"></div>
<div class="r" style="left:1145px;top:352px;width:1px;height:178px;background:#3a3a3a"></div>
<div class="r" style="left:497px;top:352px;width:1px;height:178px;background:#b0b0b0"></div>
<div class="r" style="left:498px;top:352px;width:1px;height:178px;background:#3a3a3a"></div>
<div class="r" style="left:397px;top:352px;width:749px;height:2px;background:#4d4d4d"></div>
<div class="r" style="left:397px;top:375px;width:749px;height:2px;background:#4d4d4d"></div>
<div class="r" style="left:397px;top:396px;width:749px;height:2px;background:#4d4d4d"></div>
<div class="r" style="left:397px;top:440px;width:749px;height:2px;background:#4d4d4d"></div>
<div class="r" style="left:397px;top:484px;width:749px;height:2px;background:#4d4d4d"></div>
<div class="r" style="left:397px;top:507px;width:749px;height:2px;background:#4d4d4d"></div>
<div class="r" style="left:397px;top:528px;width:749px;height:2px;background:#4d4d4d"></div>
<div class="t" style="left:408.1px;top:357.00px;font-size:16px;line-height:16px;color:#2b2b2b;letter-spacing:-0.107px;-webkit-text-stroke:0.2px #2b2b2b;">First Name:</div>
<div class="t" style="left:408.1px;top:380.00px;font-size:16px;line-height:16px;color:#2b2b2b;letter-spacing:0.000px;-webkit-text-stroke:0.2px #2b2b2b;">Address:</div>
<div class="t" style="left:408.1px;top:402.00px;font-size:16px;line-height:16px;color:#2b2b2b;letter-spacing:0.000px;-webkit-text-stroke:0.2px #2b2b2b;">City</div>
<div class="t" style="left:408.1px;top:446.00px;font-size:16px;line-height:16px;color:#2b2b2b;letter-spacing:0.000px;-webkit-text-stroke:0.2px #2b2b2b;">Home</div>
<div class="t" style="left:408.1px;top:467.00px;font-size:16px;line-height:16px;color:#2b2b2b;letter-spacing:0.000px;-webkit-text-stroke:0.2px #2b2b2b;">Phone:</div>
<div class="t" style="left:408.1px;top:490.00px;font-size:16px;line-height:16px;color:#2b2b2b;letter-spacing:0.000px;-webkit-text-stroke:0.2px #2b2b2b;">Email:</div>
<div class="t" style="left:408.1px;top:512.00px;font-size:16px;line-height:16px;color:#2b2b2b;letter-spacing:0.000px;-webkit-text-stroke:0.2px #2b2b2b;">Misc.:</div>
<div class="t" style="left:1031.5px;top:357.00px;font-size:16px;line-height:16px;color:#868686;letter-spacing:0.274px;-webkit-text-stroke:0.2px #868686;">to enter text.</div>
<div class="t" style="left:1031.5px;top:402.00px;font-size:16px;line-height:16px;color:#868686;letter-spacing:0.240px;-webkit-text-stroke:0.2px #868686;">tap here to</div>
<div class="t" style="left:976.6px;top:423.00px;font-size:16px;line-height:16px;color:#868686;letter-spacing:0.130px;-webkit-text-stroke:0.2px #868686;">enter text.</div>
<div class="t" style="left:398.5px;top:570.00px;font-size:18.1px;line-height:18.1px;color:#3478ba;letter-spacing:0.000px;-webkit-text-stroke:0.01px #3478ba;">Vehicles to Insure</div>
<div class="t" style="left:483.1px;top:600.00px;font-size:18.5px;line-height:18.5px;color:#3478ba;letter-spacing:-0.010px;-webkit-text-stroke:0.01px #3478ba;">Vehicle</div>
<div class="t" style="left:684.7px;top:600.00px;font-size:18.5px;line-height:18.5px;color:#3478ba;letter-spacing:-0.080px;-webkit-text-stroke:0.01px #3478ba;">Make</div>
<div class="t" style="left:832.0px;top:600.00px;font-size:18.5px;line-height:18.5px;color:#3478ba;letter-spacing:0.578px;-webkit-text-stroke:0.01px #3478ba;">Model</div>
<div class="t" style="left:1019.6px;top:600.00px;font-size:18.5px;line-height:18.5px;color:#3478ba;letter-spacing:-0.494px;-webkit-text-stroke:0.01px #3478ba;">Year</div>
<div class="r" style="left:396px;top:623px;width:1px;height:45px;background:#b0b0b0"></div>
<div class="r" style="left:397px;top:623px;width:1px;height:45px;background:#3a3a3a"></div>
<div class="r" style="left:633px;top:623px;width:1px;height:45px;background:#b0b0b0"></div>
<div class="r" style="left:634px;top:623px;width:1px;height:45px;background:#3a3a3a"></div>
<div class="r" style="left:785px;top:623px;width:1px;height:45px;background:#3a3a3a"></div>
<div class="r" style="left:786px;top:623px;width:1px;height:45px;background:#b0b0b0"></div>
<div class="r" style="left:957px;top:623px;width:1px;height:45px;background:#b0b0b0"></div>
<div class="r" style="left:958px;top:623px;width:1px;height:45px;background:#3a3a3a"></div>
<div class="r" style="left:1145px;top:623px;width:1px;height:45px;background:#3a3a3a"></div>
<div class="r" style="left:1146px;top:623px;width:1px;height:45px;background:#b0b0b0"></div>
<div class="r" style="left:397px;top:623px;width:749px;height:2px;background:#4d4d4d"></div>
<div class="r" style="left:397px;top:666px;width:749px;height:2px;background:#4d4d4d"></div>
<div class="t" style="left:407.8px;top:628.00px;font-size:16px;line-height:16px;color:#868686;letter-spacing:0.123px;-webkit-text-stroke:0.2px #868686;">Click or tap here to enter text.</div>
<div class="t" style="left:643.8px;top:628.00px;font-size:16px;line-height:16px;color:#868686;letter-spacing:0.133px;-webkit-text-stroke:0.2px #868686;">Click or tap here</div>
<div class="t" style="left:643.8px;top:650.00px;font-size:16px;line-height:16px;color:#868686;letter-spacing:0.125px;-webkit-text-stroke:0.2px #868686;">to enter text.</div>
<div class="t" style="left:794.8px;top:628.00px;font-size:16px;line-height:16px;color:#868686;letter-spacing:0.129px;-webkit-text-stroke:0.2px #868686;">Click or tap here to</div>
<div class="t" style="left:794.8px;top:650.00px;font-size:16px;line-height:16px;color:#868686;letter-spacing:0.130px;-webkit-text-stroke:0.2px #868686;">enter text.</div>
<div class="t" style="left:967.5px;top:628.00px;font-size:16px;line-height:16px;color:#868686;letter-spacing:0.129px;-webkit-text-stroke:0.2px #868686;">Click or tap here to</div>
<div class="t" style="left:967.5px;top:650.00px;font-size:16px;line-height:16px;color:#868686;letter-spacing:0.130px;-webkit-text-stroke:0.2px #868686;">enter text.</div>
<div class="r" style="left:399px;top:708px;width:13px;height:13px;border:1.4px solid #3a3a3a;background:#fff"></div>
<div class="t" style="left:427.2px;top:709.00px;font-size:16px;line-height:16px;color:#2b2b2b;letter-spacing:0.148px;-webkit-text-stroke:0.2px #2b2b2b;">I attest that the information provided is correct as of the date provided and wish to use this as the</div>
<div class="t" style="left:398.8px;top:734.00px;font-size:16px;line-height:16px;color:#2b2b2b;letter-spacing:0.011px;-webkit-text-stroke:0.2px #2b2b2b;">basis for an auto insurance quote.</div>
<div class="r" style="left:507px;top:238px;width:521px;height:349px;background:#f0f0f0;box-shadow:0 1px 12px 2px rgba(0,0,0,0.22),0 0 2px rgba(0,0,0,0.18)"></div>
<div class="r" style="left:507px;top:238px;width:521px;height:37px;background:#fff"></div>
<div class="t" style="left:518.2px;top:250.00px;font-size:14.2px;line-height:14.2px;color:#1e1e1e;letter-spacing:-0.125px;-webkit-text-stroke:0.01px #1e1e1e;">Record Macro</div>
<svg class="r" style="left:941px;top:249px;" width="10" height="15" viewBox="0 0 10 15"><path d="M2.4 4.4C2.4 2.5 3.7 1.6 5.3 1.6 7 1.6 8.3 2.6 8.3 4.3 8.3 5.7 7.4 6.4 6.4 7.1 5.5 7.8 5.2 8.4 5.2 10" fill="none" stroke="#222" stroke-width="1.9"/><circle cx="5.2" cy="12.7" r="1.35" fill="#222"/></svg>
<svg class="r" style="left:993px;top:250px;" width="14" height="14" viewBox="0 0 14 14"><path d="M0.7 0.7L12.6 12.6M12.6 0.7L0.7 12.6" stroke="#222" stroke-width="1.35"/></svg>
<div class="t" style="left:515.8px;top:286.00px;font-size:13.4px;line-height:13.4px;color:#1e1e1e;letter-spacing:-0.010px;-webkit-text-stroke:0.15px #1e1e1e;"><u>M</u>acro name:</div>
<div class="r" style="left:515px;top:303px;width:505px;height:24px;background:#fff;border:1px solid #a9acb3"></div>
<div class="t" style="left:519.6px;top:309.00px;font-size:13.4px;line-height:13.4px;color:#1e1e1e;letter-spacing:-0.035px;-webkit-text-stroke:0.15px #1e1e1e;">EmailQuote</div>
<div class="t" style="left:515.5px;top:332.00px;font-size:13.4px;line-height:13.4px;color:#1e1e1e;letter-spacing:0.102px;-webkit-text-stroke:0.15px #1e1e1e;">Assign macro to</div>
<div class="r" style="left:620px;top:338px;width:400px;height:1px;background:#d8d8d8"></div>
<div class="r" style="left:527px;top:356px;width:52px;height:48px;background:#e3e3e3;border:1px solid #b5b5b5"></div>
<div class="r" style="left:780px;top:356px;width:52px;height:48px;background:#e3e3e3;border:1px solid #b5b5b5"></div>
<svg class="r" style="left:527px;top:356px;" width="52" height="48" viewBox="0 0 52 48"><path d="M6.5 32.8H44.6" stroke="#333" stroke-width="2"/><rect x="9.2" y="34.8" width="19.4" height="5.4" fill="#fff" stroke="#222" stroke-width="1.6"/><rect x="31.8" y="34.8" width="10" height="5.4" fill="#fff" stroke="#222" stroke-width="1.6"/><path d="M14 34.8v5.4M18.8 34.8v5.4M23.6 34.8v5.4M36.8 34.8v5.4" stroke="#222" stroke-width="1.3"/><path d="M6.4 42.4H44.6" stroke="#222" stroke-width="1.5"/><path d="M7.5 37.5L30 15" stroke="#1a1a1a" stroke-width="5.4"/><path d="M8.3 37.2L30.3 15.2" stroke="#c00000" stroke-width="2.6"/><path d="M6.6 35.6L28.6 13.6" stroke="#d6d62a" stroke-width="1.3" stroke-dasharray="1.4 1.6"/><path d="M21 10.2L23.2 8 30 7.3 36.5 11 41 16.2 40.3 19.8 37.2 21.2 33 17.2 28 13.3 22 12.3z" fill="#bdbdbd" stroke="#222" stroke-width="1.2"/><path d="M30 8.5L35.5 15.5" stroke="#e8e8e8" stroke-width="1.5"/><path d="M39.5 22.8L43.2 26.4" stroke="#222" stroke-width="1.3"/><circle cx="39.8" cy="23" r="1.1" fill="#222"/></svg>
<div class="t" style="left:591.1px;top:374.00px;font-size:13.4px;line-height:13.4px;color:#1e1e1e;letter-spacing:0.732px;-webkit-text-stroke:0.15px #1e1e1e;"><u>B</u>utton</div>
<svg class="r" style="left:780px;top:356px;" width="52" height="48" viewBox="0 0 52 48"><rect x="6.5" y="22.5" width="37.5" height="20.5" rx="2.5" fill="#fff" stroke="#222" stroke-width="2"/><rect x="9" y="25.5" width="32.5" height="15" fill="#222"/><path d="M10.5 28h2M13.5 28h2M16.5 28h2M19.5 28h2M22.5 28h2M25.5 28h2M28.5 28h2M31.5 28h2M34.5 28h2M37.5 28h2" stroke="#fff" stroke-width="1.3"/><path d="M10 31.5h3M14.5 31.5h2M18 31.5h2M21.5 31.5h2M25 31.5h2M28.5 31.5h2M32 31.5h2M35.5 31.5h4" stroke="#fff" stroke-width="1.3"/><path d="M10 35h2M13.5 35h2M17 35h2M20.5 35h2M24 35h2M27.5 35h2M31 35h2M34 35h5.5" stroke="#fff" stroke-width="1.3"/><path d="M10 38.5h3M14.5 38.5h2M18 38.5h10M29.5 38.5h2M33 38.5h6" stroke="#fff" stroke-width="1.3"/><path d="M9 22.5c0-2 1-3 2.5-3 1 0 1.3-1 2.3-1s1.3 1 2.3 1 1.3-1 2.3-1 1.3 1 2.3 1 1.3-1 2.3-1 1.3 1 2.3 1 1.3-1 2.3-1 1.3 1 2.3 1 1.3-1 2.3-1c2 0 4-0.5 4-2.5s-1.5-2.5-3-2.5h-1.5" fill="none" stroke="#222" stroke-width="1.5"/><circle cx="33" cy="12" r="1.6" fill="#b0a020" stroke="#333" stroke-width="0.6"/></svg>
<div class="t" style="left:844.0px;top:374.00px;font-size:13.4px;line-height:13.4px;color:#1e1e1e;letter-spacing:-0.052px;-webkit-text-stroke:0.15px #1e1e1e;"><u>K</u>eyboard</div>
<div class="t" style="left:515.4px;top:416.00px;font-size:13.4px;line-height:13.4px;color:#1e1e1e;letter-spacing:0.032px;-webkit-text-stroke:0.15px #1e1e1e;"><u>S</u>tore macro in:</div>
<div class="r" style="left:515px;top:434px;width:505px;height:26px;background:#fff;border:1px solid #ababab"></div>
<div class="r" style="left:999px;top:434px;width:21px;height:26px;background:#e1e1e1;border:1px solid #adadad"></div>
<svg class="r" style="left:1003px;top:442px;" width="12" height="8" viewBox="0 0 12 8"><path d="M1 1.5L6 6.5L11 1.5" fill="none" stroke="#444" stroke-width="1.3"/></svg>
<div class="t" style="left:520.6px;top:440.00px;font-size:13.4px;line-height:13.4px;color:#1e1e1e;letter-spacing:0.129px;-webkit-text-stroke:0.15px #1e1e1e;">All Documents (Normal.dotm)</div>
<div class="t" style="left:515.6px;top:466.00px;font-size:13.4px;line-height:13.4px;color:#1e1e1e;letter-spacing:0.250px;-webkit-text-stroke:0.15px #1e1e1e;"><u>D</u>escription:</div>
<div class="r" style="left:515px;top:483px;width:505px;height:54px;background:#fff;border:1px solid #ababab"></div>
<div class="r" style="left:829px;top:550px;width:89px;height:27px;background:#e1e1e1;border:2px solid #0a78d7"></div>
<div class="t" style="left:865.0px;top:557.00px;font-size:13.4px;line-height:13.4px;color:#1e1e1e;letter-spacing:-1.661px;-webkit-text-stroke:0.15px #1e1e1e;">OK</div>
<div class="r" style="left:930px;top:550px;width:89px;height:27px;background:#e1e1e1;border:1px solid #adadad"></div>
<div class="t" style="left:955.0px;top:557.00px;font-size:13.4px;line-height:13.4px;color:#1e1e1e;letter-spacing:-0.383px;-webkit-text-stroke:0.15px #1e1e1e;">Cancel</div>
<div class="t" style="left:9.6px;top:842.00px;font-size:14px;line-height:14px;color:#555555;letter-spacing:-0.501px;">Page 1 of 1</div>
<div class="t" style="left:101.2px;top:842.00px;font-size:14px;line-height:14px;color:#555555;letter-spacing:-0.312px;">151 words</div>
<svg class="r" style="left:187px;top:839px;" width="20" height="18" viewBox="0 0 20 18"><path d="M8.6 14.4H2.3Q1.1 14.4 1.1 13.2V2.4Q1.1 1.2 2.3 1.2H8.6V16.6" fill="none" stroke="#737373" stroke-width="1.4"/><path d="M8.6 1.2H15.4Q16.6 1.2 16.6 2.4V3.6M16.6 9.6V13.2Q16.6 14.4 15.4 14.4H8.6" fill="none" stroke="#737373" stroke-width="1.4"/><path d="M10.8 7.6L13 10L17.6 4.6" fill="none" stroke="#737373" stroke-width="1.9"/></svg>
<svg class="r" style="left:229px;top:839px;" width="18" height="18" viewBox="0 0 18 18"><circle cx="4.6" cy="4.5" r="3.5" fill="#7a7a7a"/><rect x="9.8" y="2.8" width="6.4" height="2.8" fill="#7a7a7a"/><path d="M2.8 10V16H16V5.6" fill="none" stroke="#7a7a7a" stroke-width="1.5"/><path d="M6 9.4h1.5M9.4 9.4h1.5M12.8 9.4h1.5M6 11.6h1.5M9.4 11.6h1.5M12.8 11.6h1.5M6 13.8h1.5M9.4 13.8h1.5M12.8 13.8h1.5" stroke="#888" stroke-width="1.1"/></svg>
<div class="r" style="left:1231px;top:837px;width:46px;height:23px;background:#c6c6c6"></div>
<svg class="r" style="left:1199px;top:839px;" width="18" height="18" viewBox="0 0 18 18"><path d="M1.2 1.5H7.5L9 2.8L10.5 1.5H16.8V14.5H10.5L9 15.8L7.5 14.5H1.2Z" fill="none" stroke="#6d6d6d" stroke-width="1.3" stroke-linejoin="round"/><path d="M9 2.8V17" stroke="#6d6d6d" stroke-width="1.3"/><path d="M3.2 4.6h3.8M3.2 7.1h3.8M3.2 9.6h3.8M3.2 12.1h3.8M11 4.6h3.8M11 7.1h3.8M11 9.6h3.8M11 12.1h3.8" stroke="#777" stroke-width="1.1"/></svg>
<svg class="r" style="left:1245px;top:839px;" width="18" height="18" viewBox="0 0 18 18"><rect x="0.9" y="0.9" width="15.6" height="15.2" rx="1.5" fill="none" stroke="#666" stroke-width="1.5"/><path d="M3.3 3.6h10.8M3.3 6.1h10.8M3.3 8.6h10.8M3.3 11.1h10.8M3.3 13.6h10.8" stroke="#777" stroke-width="1.2"/></svg>
<svg class="r" style="left:1290px;top:839px;" width="20" height="18" viewBox="0 0 20 18"><path d="M8 13.8H1V0.8h13.8v5" fill="none" stroke="#777" stroke-width="1.3"/><path d="M3 3.6h9.5M3 6.1h6M3 8.6h5M3 11.1h4" stroke="#888" stroke-width="1.1"/><circle cx="13.2" cy="12.2" r="5.3" fill="#777" stroke="#f1f1f1" stroke-width="1"/><path d="M10.5 9.5c1.5 0.5 1.5 2 3 2.5s1 2.5 2.5 3" fill="none" stroke="#f1f1f1" stroke-width="1.1"/></svg>
<div class="r" style="left:1328px;top:847px;width:8px;height:2px;background:#666"></div>
<div class="r" style="left:1340px;top:847px;width:120px;height:1px;background:#bdbdbd"></div>
<div class="r" style="left:1398px;top:841px;width:5px;height:13px;background:#6a6a6a"></div>
<div class="r" style="left:1465px;top:847px;width:10px;height:2px;background:#666"></div>
<div class="r" style="left:1469px;top:843px;width:2px;height:10px;background:#666"></div>
<div class="t" style="left:1493.3px;top:842.00px;font-size:14px;line-height:14px;color:#555555;letter-spacing:-1.436px;">100%</div>
<div class="r" style="left:1533px;top:77px;width:1px;height:783px;background:#f7f7f7"></div>
<div class="r" style="left:2px;top:859px;width:1532px;height:1px;background:#f7f7f7"></div>
<div class="r" style="left:1px;top:78px;width:1px;height:782px;background:#4d4d4d"></div>
<div class="r" style="left:2px;top:78px;width:1px;height:782px;background:#efefef"></div>
<div class="r" style="left:1px;top:2px;width:1px;height:76px;background:#16305a"></div>
</body></html>
